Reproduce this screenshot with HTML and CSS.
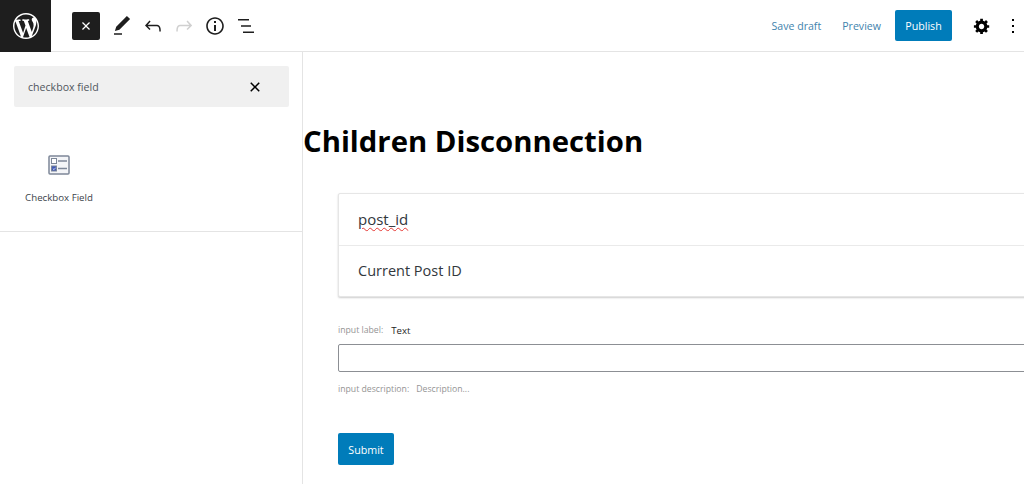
FILE: index.html
```html
<!DOCTYPE html>
<html lang="en">
<head>
    <meta charset="UTF-8">
    <title>Children Disconnection</title>
    <link rel="stylesheet" href="styles.css">
</head>
<body>
    <!-- Top toolbar -->
    <header class="topbar">
        <div class="logo">
            <svg viewBox="0 0 20 20" fill="#fff"><path d="M20 10c0-5.51-4.49-10-10-10C4.48 0 0 4.49 0 10c0 5.52 4.48 10 10 10 5.51 0 10-4.48 10-10zM7.78 15.37L4.37 6.22c.55-.02 1.17-.08 1.17-.08.5-.06.44-1.13-.06-1.11 0 0-1.45.11-2.37.11-.18 0-.37 0-.58-.01C4.12 2.69 6.87 1.11 10 1.11c2.33 0 4.45.87 6.05 2.34-.68-.11-1.65.39-1.65 1.58 0 .74.45 1.36.9 2.1.35.61.55 1.36.55 2.46 0 1.49-1.4 5-1.4 5l-3.03-8.37c.54-.02.82-.17.82-.17.5-.05.44-1.25-.06-1.22 0 0-1.44.12-2.38.12-.87 0-2.33-.12-2.33-.12-.5-.03-.56 1.2-.06 1.22l.92.08 1.26 3.41zM17.41 10c.24-.64.74-1.87.43-4.25.7 1.29 1.05 2.71 1.05 4.25 0 3.29-1.73 6.24-4.4 7.78.97-2.59 1.94-5.2 2.92-7.78zM6.1 18.09C3.12 16.65 1.11 13.53 1.11 10c0-1.3.23-2.48.72-3.59C3.25 10.3 4.67 14.2 6.1 18.09zm4.03-6.63l2.58 6.98c-.86.29-1.76.45-2.71.45-.79 0-1.57-.11-2.29-.33.81-2.38 1.62-4.74 2.42-7.1z"/></svg>
        </div>
        <div class="tools">
            <button class="tool tool-close">
                <svg width="20" height="20" viewBox="0 0 24 24" fill="#fff"><path d="M12 13.06l3.712 3.713 1.061-1.06L13.061 12l3.712-3.712-1.06-1.06L12 10.938 8.288 7.227l-1.061 1.06L10.939 12l-3.712 3.712 1.06 1.061L12 13.061z"/></svg>
            </button>
            <button class="tool tool-edit">
                <svg width="24" height="24" viewBox="0 0 24 24"><path d="M20.1 5.1L16.9 2 6.2 12.7l-1.3 4.4 4.5-1.3L20.1 5.1zM4 20.8h8v-1.5H4v1.5z"/></svg>
            </button>
            <button class="tool">
                <svg width="24" height="24" viewBox="0 0 24 24"><path d="M18.3 11.7c-.6-.6-1.4-.9-2.3-.9H6.7l2.9-3.3-1.1-1-4.5 5L8.5 16l1-1-2.7-2.7H16c.5 0 .9.2 1.3.5 1 1 1 3.4 1 4.5v.3h1.5v-.2c0-1.5 0-4.3-1.5-5.7z"/></svg>
            </button>
            <button class="tool tool-off">
                <svg width="24" height="24" viewBox="0 0 24 24"><path d="M15.6 6.5l-1.1 1 2.9 3.3H8c-.9 0-1.7.3-2.3.9-1.4 1.5-1.4 4.2-1.4 5.6v.2h1.5v-.3c0-1.1 0-3.5 1-4.5.3-.3.7-.5 1.3-.5h9.2L14.5 15l1.1 1.1 4.6-4.6-4.6-5z"/></svg>
            </button>
            <button class="tool">
                <svg width="24" height="24" viewBox="0 0 24 24"><path d="M12 3.2c-4.8 0-8.8 3.9-8.8 8.8 0 4.8 3.9 8.8 8.8 8.8 4.8 0 8.8-3.9 8.8-8.8 0-4.8-4-8.8-8.8-8.8zm0 16c-4 0-7.2-3.3-7.2-7.2C4.8 8 8 4.8 12 4.8s7.2 3.3 7.2 7.2c0 4-3.2 7.2-7.2 7.2zM11 17h2v-6h-2v6zm0-8h2V7h-2v2z"/></svg>
            </button>
            <button class="tool">
                <svg width="24" height="24" viewBox="0 0 24 24"><path d="M4 5h11v1.5H4zM7 11.25h10v1.5H7zM9 17.5h11V19H9z"/></svg>
            </button>
        </div>
        <div class="actions">
            <a class="link-btn">Save draft</a>
            <a class="link-btn">Preview</a>
            <button class="publish">Publish</button>
            <svg class="gear" width="18" height="18" viewBox="0 0 20 20"><path d="M18 12h-2.18c-.17.7-.44 1.35-.81 1.93l1.54 1.54-2.1 2.1-1.54-1.54c-.58.36-1.23.63-1.91.79V19H8v-2.18c-.68-.16-1.33-.43-1.91-.79l-1.54 1.54-2.12-2.12 1.54-1.54c-.36-.58-.63-1.23-.79-1.91H1V9.03h2.17c.16-.7.44-1.35.8-1.94L2.43 5.55l2.1-2.1 1.54 1.54c.58-.37 1.24-.64 1.93-.81V2h3v2.18c.68.16 1.33.43 1.91.79l1.54-1.54 2.12 2.12-1.54 1.54c.36.59.64 1.24.8 1.94H18V12zm-8.5 1.5c1.66 0 3-1.34 3-3s-1.34-3-3-3-3 1.34-3 3 1.34 3 3 3z"/></svg>
            <svg class="dots" width="24" height="24" viewBox="0 0 24 24"><path d="M13 19h-2v-2h2v2zm0-6h-2v-2h2v2zm0-6h-2V5h2v2z"/></svg>
        </div>
    </header>

    <div class="main">
        <!-- Block inserter -->
        <aside class="sidebar">
            <div class="search">
                <span class="search-text">checkbox field</span>
                <svg width="24" height="24" viewBox="0 0 24 24"><path d="M12 13.06l3.712 3.713 1.061-1.06L13.061 12l3.712-3.712-1.06-1.06L12 10.938 8.288 7.227l-1.061 1.06L10.939 12l-3.712 3.712 1.06 1.061L12 13.061z"/></svg>
            </div>
            <div class="results">
                <div class="block-item">
                    <svg width="22" height="20" viewBox="0 0 22 20">
                        <rect x="1" y="1" width="20" height="18" rx="1" fill="#f4f5f8" stroke="#7d8798" stroke-width="1.5"/>
                        <rect x="3.5" y="3.5" width="5" height="5" fill="#fff" stroke="#7d8798"/>
                        <rect x="3.5" y="11" width="5" height="5" fill="#3f57b5" stroke="#7d8798"/>
                        <path d="M4.8 13.5l1.2 1.2 1.6-2" fill="none" stroke="#dfe4f5" stroke-width=".8"/>
                        <path d="M10 6h9M10 13.5h9" stroke="#7d8798" stroke-width="1.5"/>
                    </svg>
                    <span class="block-name">Checkbox Field</span>
                </div>
            </div>
        </aside>

        <!-- Editor canvas -->
        <main class="editor">
            <h1 class="post-title">Children Disconnection</h1>
            <div class="fields">
                <div class="card">
                    <div class="card-row"><span class="misspelt">post_id</span></div>
                    <div class="card-row">Current Post ID</div>
                </div>
                <div class="meta-row label-row">
                    <span class="meta-name">input label:</span>
                    <span class="label-value">Text</span>
                </div>
                <div class="text-input"></div>
                <div class="meta-row desc-row">
                    <span class="meta-name">input description:</span>
                    <span class="desc-value">Description...</span>
                </div>
                <button class="submit">Submit</button>
            </div>
        </main>
    </div>
</body>
</html>
```
FILE: styles.css
```css
* {
    box-sizing: border-box;
}
html, body {
    height: 100%;
}
body {
    margin: 0;
    overflow: hidden;
    background: #fff;
    color: #1e1e1e;
    font-family: "Open Sans", "Noto Sans", sans-serif;
}
button {
    font-family: inherit;
    border: none;
    padding: 0;
    background: none;
}
svg {
    display: block;
}

/* top bar */
.topbar {
    display: flex;
    align-items: center;
    height: 52px;
    border-bottom: 1px solid #e4e4e4;
}
.logo {
    width: 51px;
    height: 52px;
    margin-bottom: -1px;
    background: #1e1e1e;
    display: flex;
    align-items: center;
    justify-content: center;
}
.logo svg {
    width: 26px;
    height: 26px;
}
.tools {
    display: flex;
    align-items: center;
    margin-left: 21px;
    gap: 3px;
}
.tool {
    width: 28px;
    height: 28px;
    display: flex;
    align-items: center;
    justify-content: center;
    fill: #1e1e1e;
}
.tool-close {
    background: #1e1e1e;
    border-radius: 2px;
}
.tool-edit {
    margin-left: 5px;
}
.tool-off {
    fill: #d0d0d0;
}
.actions {
    display: flex;
    align-items: center;
    margin-left: auto;
}
.link-btn {
    color: #3f83ad;
    font-size: 10.6px;
    margin-right: 21px;
}
.publish {
    width: 57px;
    height: 31px;
    margin-left: -7px;
    background: #007cba;
    color: #fff;
    font-size: 10.7px;
    border-radius: 2px;
}
.gear {
    margin-left: 21px;
}
.dots {
    margin: 0 -1px 0 10px;
}

/* layout */
.main {
    display: flex;
    height: 432px;
}
.sidebar {
    width: 303px;
    flex-shrink: 0;
    border-right: 1px solid #e4e4e4;
}
.search {
    display: flex;
    align-items: center;
    justify-content: space-between;
    width: 275px;
    height: 41px;
    margin: 14px 0 0 14px;
    padding: 0 22px 0 14px;
    background: #f0f0f0;
    border-radius: 2px;
}
.search-text {
    font-size: 10.6px;
    color: #50575e;
}
.results {
    height: 125px;
    border-bottom: 1px solid #e4e4e4;
}
.block-item {
    display: flex;
    flex-direction: column;
    align-items: center;
    width: 118px;
    padding-top: 48px;
}
.block-name {
    margin-top: 16px;
    font-size: 9.7px;
    color: #3c434a;
}

/* editor */
.editor {
    flex: 1;
    min-width: 0;
}
.post-title {
    margin: 67px 0 0;
    font-size: 29.3px;
    line-height: 44px;
    font-weight: 700;
    color: #000;
}
.fields {
    padding-left: 35px;
    margin-right: -10px;
}
.card {
    margin-top: 30px;
    background: #fff;
    border: 1px solid #e6e6e6;
    border-radius: 2px;
    box-shadow: 0 1px 2px rgba(0, 0, 0, 0.2);
}
.card-row {
    height: 51px;
    padding: 0 0 2px 19px;
    display: flex;
    align-items: center;
    font-size: 14.5px;
    color: #32373c;
}
.card-row + .card-row {
    border-top: 1px solid #eaeaea;
}
.misspelt {
    font-size: 15px;
    text-decoration: underline wavy #e53935 1px;
    text-underline-offset: 2px;
}
.meta-row {
    display: flex;
    align-items: center;
    font-size: 8.7px;
    color: #949494;
}
.label-row {
    height: 16px;
    margin-top: 25px;
}
.label-value {
    margin-left: 8px;
    font-size: 9.6px;
    color: #1e1e1e;
}
.text-input {
    height: 28px;
    margin-top: 6px;
    border: 1px solid #8c8f94;
    border-radius: 2px;
}
.desc-row {
    height: 16px;
    margin-top: 9px;
}
.desc-value {
    margin-left: 7px;
}
.submit {
    display: block;
    width: 56px;
    height: 32px;
    margin-top: 36px;
    padding-top: 2px;
    background: #007cba;
    color: #fff;
    font-size: 10.7px;
    border-radius: 2px;
}
```
